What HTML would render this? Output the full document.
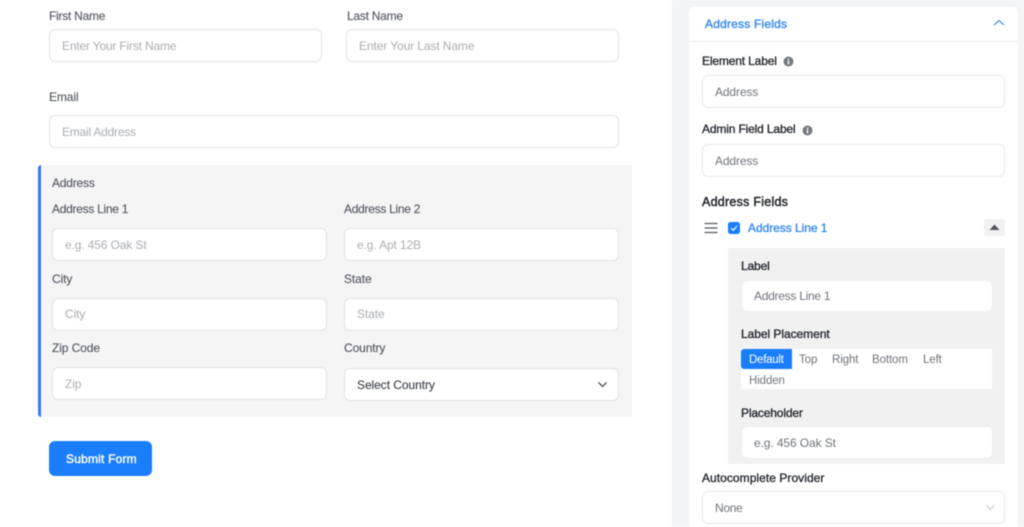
<!DOCTYPE html>
<html><head><meta charset="utf-8"><style>
html,body{margin:0;padding:0;background:#fff}
body{width:1024px;height:527px;overflow:hidden;position:relative;font-family:"Liberation Sans",sans-serif;font-size:12px}
#r{position:absolute;left:0;top:0;width:1024px;height:527px;overflow:hidden;filter:blur(.4px)}
#r div,#r svg{position:absolute;box-sizing:border-box}
.t{white-space:nowrap;line-height:16px;letter-spacing:-.2px}
.l{color:#575c63;-webkit-text-stroke:.15px #575c63}
.d{color:#262a30;-webkit-text-stroke:.35px #262a30;letter-spacing:-.15px}
.p{color:#a9acb2;letter-spacing:-.18px}
.v{color:#6f737a;letter-spacing:-.13px}
.o{font-size:11.5px;letter-spacing:-.1px}
.i{background:#fff;border:1px solid #e0e2e6;border-radius:6px}
.j{background:#fff;border:1px solid #e6e8eb;border-radius:6px}
</style></head><body><div id="r">

<div class="t l" style="left:49px;top:8px;letter-spacing:-.25px">First Name</div>
<div class="i" style="left:49px;top:29px;width:273px;height:33px"></div>
<div class="t p" style="left:62px;top:38px">Enter Your First Name</div>
<div class="t l" style="left:347px;top:8px;letter-spacing:-.25px">Last Name</div>
<div class="i" style="left:346px;top:29px;width:273px;height:33px"></div>
<div class="t p" style="left:359px;top:38px;letter-spacing:-.1px">Enter Your Last Name</div>
<div class="t l" style="left:49px;top:89px;letter-spacing:-.1px">Email</div>
<div class="i" style="left:49px;top:115px;width:570px;height:33px"></div>
<div class="t p" style="left:62px;top:124px;letter-spacing:-.22px">Email Address</div>

<div style="left:38px;top:165px;width:594px;height:252px;background:#f5f5f6;border-left:3px solid #2f80ed;border-radius:3px 0 0 3px"></div>
<div class="t l" style="left:52px;top:175px;letter-spacing:-.2px">Address</div>
<div class="t l" style="left:52px;top:201px;letter-spacing:-.28px">Address Line 1</div>
<div class="i" style="left:52px;top:228px;width:275px;height:33px"></div>
<div class="t p" style="left:65px;top:237px;letter-spacing:-.12px">e.g. 456 Oak St</div>
<div class="t l" style="left:344px;top:201px;letter-spacing:-.28px">Address Line 2</div>
<div class="i" style="left:344px;top:228px;width:275px;height:33px"></div>
<div class="t p" style="left:357px;top:237px;letter-spacing:-.12px">e.g. Apt 12B</div>
<div class="t l" style="left:52px;top:271px;letter-spacing:-.1px">City</div>
<div class="i" style="left:52px;top:298px;width:275px;height:33px"></div>
<div class="t p" style="left:65px;top:306px;letter-spacing:-.1px">City</div>
<div class="t l" style="left:344px;top:271px;letter-spacing:-.1px">State</div>
<div class="i" style="left:344px;top:298px;width:275px;height:33px"></div>
<div class="t p" style="left:357px;top:306px;letter-spacing:-.1px">State</div>
<div class="t l" style="left:52px;top:340px;letter-spacing:-.1px">Zip Code</div>
<div class="i" style="left:52px;top:367px;width:275px;height:33px"></div>
<div class="t p" style="left:65px;top:376px;letter-spacing:-.1px">Zip</div>
<div class="t l" style="left:344px;top:340px;letter-spacing:-.1px">Country</div>
<div class="i" style="left:344px;top:368px;width:275px;height:33px"></div>
<div class="t" style="left:357px;top:377px;color:#42474e;letter-spacing:-.06px;-webkit-text-stroke:.15px #42474e">Select Country</div>
<svg style="left:596px;top:380px" width="13" height="10" viewBox="0 0 13 10"><path d="M2.5 2.5L6.5 6.5L10.5 2.5" fill="none" stroke="#4a4f56" stroke-width="1.3"/></svg>

<div style="left:49px;top:441px;width:103px;height:35px;background:#1a7efb;border-radius:6px"></div>
<div class="t" style="left:66px;top:451px;color:#fff;letter-spacing:.2px;-webkit-text-stroke:.4px #fff">Submit Form</div>

<div style="left:672px;top:0;width:352px;height:527px;background:#f3f4f5"></div>
<div style="left:689px;top:7px;width:329px;height:520px;background:#fff;border-radius:5px 5px 0 0"></div>
<div style="left:689px;top:41px;width:329px;height:1px;background:#ebedef"></div>
<div class="t" style="left:705px;top:16px;color:#2f86ee;letter-spacing:.2px;-webkit-text-stroke:.35px #2f86ee">Address Fields</div>
<svg style="left:992px;top:18px" width="14" height="10" viewBox="0 0 14 10"><path d="M2 7L7 2.5L12 7" fill="none" stroke="#4a94ee" stroke-width="1.3"/></svg>

<div class="t d" style="left:702px;top:53px">Element Label</div>
<svg style="left:783px;top:56px" width="11" height="11" viewBox="0 0 11 11"><circle cx="5.5" cy="5.5" r="5" fill="#777b80"/><rect x="4.8" y="4.6" width="1.4" height="3.8" fill="#fff"/><rect x="4.8" y="2.6" width="1.4" height="1.3" fill="#fff"/></svg>
<div class="j" style="left:702px;top:75px;width:303px;height:33px"></div>
<div class="t v" style="left:715px;top:84px">Address</div>
<div class="t d" style="left:702px;top:121px">Admin Field Label</div>
<svg style="left:802px;top:125px" width="11" height="11" viewBox="0 0 11 11"><circle cx="5.5" cy="5.5" r="5" fill="#777b80"/><rect x="4.8" y="4.6" width="1.4" height="3.8" fill="#fff"/><rect x="4.8" y="2.6" width="1.4" height="1.3" fill="#fff"/></svg>
<div class="j" style="left:702px;top:144px;width:303px;height:33px"></div>
<div class="t v" style="left:715px;top:153px">Address</div>
<div class="t" style="left:702px;top:194px;color:#23272d;font-size:12.5px;letter-spacing:.25px;-webkit-text-stroke:.45px #23272d">Address Fields</div>

<svg style="left:704px;top:222px" width="14" height="12" viewBox="0 0 14 12"><path d="M0.5 1.5H13.5M0.5 6H13.5M0.5 10.5H13.5" stroke="#55595f" stroke-width="1.3" fill="none"/></svg>
<svg style="left:728px;top:222px" width="12" height="12" viewBox="0 0 12 12"><rect width="12" height="12" rx="2.5" fill="#1a7efb"/><path d="M3 6.2L5.2 8.3L9 4" fill="none" stroke="#fff" stroke-width="1.2"/></svg>
<div class="t" style="left:748px;top:220px;color:#2f86ee;letter-spacing:-.05px;-webkit-text-stroke:.3px #2f86ee">Address Line 1</div>
<div style="left:984px;top:219px;width:21px;height:17px;background:#f1f1f2;border-radius:2px"></div>
<svg style="left:989px;top:224px" width="11" height="7" viewBox="0 0 11 7"><path d="M5.5 0.5L10.5 6H0.5Z" fill="#55595f"/></svg>

<div style="left:728px;top:248px;width:277px;height:216px;background:#f1f1f2"></div>
<div class="t d" style="left:741px;top:258px">Label</div>
<div class="j" style="left:741px;top:280px;width:252px;height:32px;border-color:#eceef0"></div>
<div class="t v" style="left:754px;top:288px;letter-spacing:-.27px">Address Line 1</div>
<div class="t d" style="left:741px;top:326px;letter-spacing:-.05px">Label Placement</div>
<div style="left:741px;top:349px;width:251px;height:40px;background:#fff"></div>
<div style="left:741px;top:349px;width:51px;height:20px;background:#1a7efb;border-radius:3px 0 0 3px"></div>
<div class="t o" style="left:749px;top:352px;color:#fff;letter-spacing:-.25px">Default</div>
<div class="t v o" style="left:799px;top:352px">Top</div>
<div class="t v o" style="left:832px;top:352px">Right</div>
<div class="t v o" style="left:872px;top:352px">Bottom</div>
<div class="t v o" style="left:923px;top:352px">Left</div>
<div class="t v o" style="left:749px;top:373px">Hidden</div>
<div class="t d" style="left:741px;top:405px">Placeholder</div>
<div class="j" style="left:741px;top:426px;width:252px;height:33px;border-color:#eceef0"></div>
<div class="t v" style="left:754px;top:435px;letter-spacing:-.1px">e.g. 456 Oak St</div>

<div class="t d" style="left:702px;top:470px;letter-spacing:.05px">Autocomplete Provider</div>
<div class="j" style="left:702px;top:491px;width:303px;height:33px"></div>
<div class="t v" style="left:715px;top:500px;letter-spacing:-.3px">None</div>
<svg style="left:984px;top:503px" width="13" height="10" viewBox="0 0 13 10"><path d="M2.5 2.5L6.5 6.5L10.5 2.5" fill="none" stroke="#c6c8cc" stroke-width="1.1"/></svg>

</div></body></html>
